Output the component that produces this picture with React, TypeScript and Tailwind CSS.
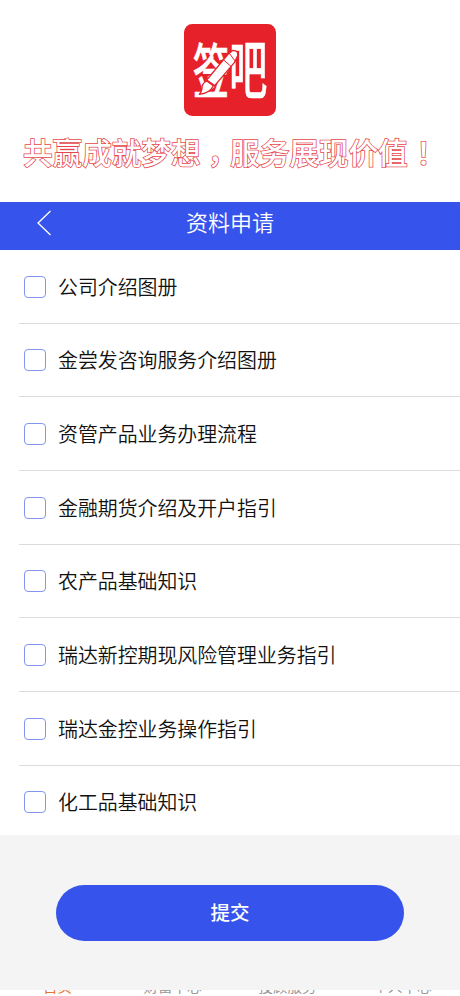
import React, { useState } from 'react';

const items = [
  '公司介绍图册',
  '金尝发咨询服务介绍图册',
  '资管产品业务办理流程',
  '金融期货介绍及开户指引',
  '农产品基础知识',
  '瑞达新控期现风险管理业务指引',
  '瑞达金控业务操作指引',
  '化工品基础知识',
];

const tabs = ['首页', '财富中心', '投顾服务', '个人中心'];

const Logo: React.FC = () => (
  <svg viewBox="0 0 276 276" className="block h-[92px] w-[92px]">
    <rect width="276" height="276" rx="25" fill="#e6212a" />
    <g fill="#fff" stroke="#fff" strokeWidth="2" fontFamily="'Noto Sans CJK SC', sans-serif">
      <text transform="translate(26 208) scale(0.62 1)" fontSize="176" fontWeight="500">签</text>
      <text transform="translate(136 208) scale(0.6 1)" fontSize="190" fontWeight="500">吧</text>
    </g>
    {/* Brush */}
    <g fill="#fff" stroke="#e6212a" strokeWidth="4" strokeLinejoin="round">
      <path d="M132 91 L147 79 Q164 80 161 95 L151 116 L92 185 L68 168 Z" />
      <path d="M68 171 L88 185 Q78 207 46 211 Q56 198 54 187 Q58 175 68 171 Z" />
      <path d="M119 108 L141 127 M136 88 L154 112" fill="none" strokeWidth="3" />
    </g>
  </svg>
);

const App: React.FC = () => {
  const [selected, setSelected] = useState<string[]>([]);

  const toggle = (item: string) => {
    setSelected((prev) => (prev.includes(item) ? prev.filter((i) => i !== item) : [...prev, item]));
  };

  return (
    <div className="flex h-[996px] w-[460px] flex-col overflow-hidden bg-white font-['Noto_Sans_CJK_SC',sans-serif] text-[#111]">
      {/* Brand */}
      <div className="flex h-[202px] shrink-0 flex-col items-center pt-[23.5px]">
        <Logo />
        <p className="mt-[16.5px] w-full whitespace-nowrap pl-[23px] text-[29.6px] font-medium leading-[40px] text-white antialiased [-webkit-text-stroke:1.5px_#e5464b] [paint-order:stroke_fill]">
          共赢成就梦想<span className="inline-block translate-x-[7px] -translate-y-px">，</span>服务展现价值<span className="inline-block translate-x-px font-['Noto_Sans_CJK_TC',sans-serif]">！</span>
        </p>
      </div>

      {/* Header */}
      <header className="grid h-12 shrink-0 grid-cols-[88px_1fr_88px] items-center bg-[#3654eb] pb-[7px] text-white">
        <button className="pl-[36px]">
          <svg viewBox="0 0 16 26" className="block h-[26px] w-4" fill="none" stroke="currentColor" strokeWidth="1.3">
            <path d="M14.5 1 L2 13 L14.5 25" />
          </svg>
        </button>
        <h1 className="-mt-[3px] text-center text-[22px] font-[350] leading-8">资料申请</h1>
      </header>

      {/* Options */}
      <div className="h-[585px] shrink-0 overflow-hidden pl-[19px]">
        {items.map((item) => (
          <label key={item} className="flex h-[73.7px] items-center border-b border-[#dcdcdc] pl-[5px] pt-[0.4px]">
            <input
              type="checkbox"
              checked={selected.includes(item)}
              onChange={() => toggle(item)}
              className="h-[22px] w-[22px] appearance-none rounded-[4px] border border-[#8496ee] bg-white checked:bg-[#3654eb]"
            />
            <span className="ml-3 text-[19.9px] font-[350] leading-7">{item}</span>
          </label>
        ))}
      </div>

      {/* Submit */}
      <div className="flex h-[155px] shrink-0 justify-center bg-[#f4f4f4] pt-[49.5px]">
        <button className="h-14 w-[348px] rounded-full bg-[#3654eb] pb-px text-[19.5px] font-medium text-white">提交</button>
      </div>

      <nav className="flex h-[4px] shrink-0 overflow-hidden text-[14.5px] leading-5">
        {tabs.map((tab, i) => (
          <span key={tab} className={i === 0 ? 'flex-1 text-center text-[#e8762a]' : 'flex-1 text-center text-[#999]'}>
            <span className="-mt-[14px] block">{tab}</span>
          </span>
        ))}
      </nav>
    </div>
  );
};

export default App;
